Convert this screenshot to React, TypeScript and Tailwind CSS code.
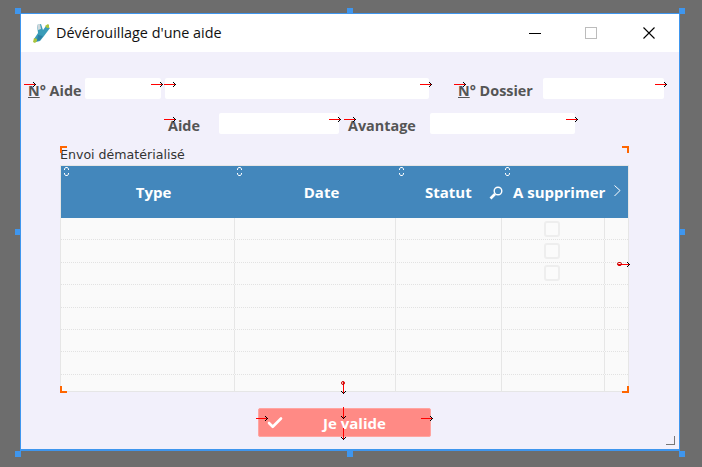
import { Check } from "lucide-react";

const labelCls = "font-['Open_Sans',sans-serif] font-bold text-[14.4px] leading-[20px] text-[#555555]";
const inputCls = "h-[21px] bg-white rounded-[2px] shrink-0";
const rows = [0, 1, 2, 3, 4, 5, 6, 7];

// editor overlay: arrows between focusable fields
const rightArrows = [
  [24, 84], [151, 84], [164, 84], [420, 84], [454, 84], [655, 84],
  [164, 119], [329, 119], [344, 119], [566, 119],
  [256, 418], [421, 418],
];
const downArrows = [
  [343, 407],
  [343, 428],
];
const handles = [
  [15, 8], [347, 8], [679, 8],
  [15, 229], [679, 229],
  [15, 451], [347, 451], [679, 451],
];
const resizers = [64, 237, 399, 505];

const RightArrow = ({ x, y }: { x: number; y: number }) => (
  <svg className="absolute" style={{ left: x, top: y - 4 }} width="13" height="9" viewBox="0 0 13 9" fill="none" shapeRendering="crispEdges">
    <path d="M0 4.5H12" stroke="#ff0000" />
    <path d="M9 1.5h1v1h1v1h1v1h-1v1h-1v1H9v-1h1v-1h1v-1h-1v-1H9z" fill="#000" />
  </svg>
);

const DownArrow = ({ x, y }: { x: number; y: number }) => (
  <svg className="absolute" style={{ left: x - 4, top: y }} width="9" height="13" viewBox="0 0 9 13" fill="none" shapeRendering="crispEdges">
    <path d="M4.5 0V12" stroke="#ff0000" />
    <path d="M1.5 9v1h1v1h1v1h1v-1h1v-1h1V9h-1v1h-1v1h-1v-1h-1V9z" fill="#000" />
  </svg>
);

const AppIcon = () => (
  <svg width="18" height="20" viewBox="0 0 18 20" className="shrink-0">
    <path d="M4 2l4-1 2 6 3-4 4 2-6 8-4 5-4 1-2-3 4-6z" fill="#3a9cb8" />
    <path d="M4 2l3-1 1 5-3 1z" fill="#cfd8dc" />
    <path d="M12 3l3-2 1 1 0 3-2 0z" fill="#a9c43c" />
    <path d="M1 15l3 1 0 2-2 2-2-1z" fill="#a9c43c" />
    <path d="M5 12l5 1-3 4-3 1z" fill="#2b7fa3" />
  </svg>
);

export default function App() {
  return (
    <div className="relative w-[702px] h-[467px] overflow-hidden bg-[#6d6d6d] pl-[20px] pt-[13px]">
      <div className="w-[660px] h-[438px] border-x border-t border-b-2 border-[#3f96ee] bg-[#f2f0fb] flex flex-col">
        {/* title bar */}
        <div className="h-[38px] bg-white flex items-center shrink-0 pl-[12px]">
          <AppIcon />
          <span className="ml-[5px] font-['Open_Sans',sans-serif] text-[14.4px] text-[#111111]">
            Dévérouillage d'une aide
          </span>
          <div className="ml-auto flex items-center mr-[24px]">
            <div className="w-[12px] h-px bg-black" />
            <div className="ml-[44px] w-[12px] h-[12px] border border-[#bcbcbc]" />
            <svg className="ml-[46px]" width="12" height="12" viewBox="0 0 12 12" fill="none">
              <path d="M0.5 0.5L11.5 11.5M11.5 0.5L0.5 11.5" stroke="#000" strokeWidth="1.1" />
            </svg>
          </div>
        </div>

        {/* form */}
        <div className="flex pt-[26px] pl-[7px] h-[47px] shrink-0">
          <div className={`${labelCls} w-[57px] pt-[3px]`}>
            <span className="underline">N</span>° Aide
          </div>
          <div className={`${inputCls} w-[76px]`} />
          <div className={`${inputCls} w-[264px] ml-[4px]`} />
          <div className={`${labelCls} w-[114px] pl-[29px] pt-[3px] whitespace-nowrap`}>
            <span className="underline">N</span>° Dossier
          </div>
          <div className={`${inputCls} w-[121px]`} />
        </div>
        <div className="flex mt-[14px] pl-[147px] h-[21px] shrink-0">
          <div className={`${labelCls} w-[51px] pt-[3px]`}>Aide</div>
          <div className={`${inputCls} w-[120px]`} />
          <div className={`${labelCls} w-[91px] pl-[9px] pt-[3px]`}>Avantage</div>
          <div className={`${inputCls} w-[145px]`} />
        </div>

        {/* table */}
        <div className="ml-[39px] mt-[12px] w-[569px] shrink-0">
          <div className="font-['DejaVu_Sans',sans-serif] text-[12.6px] leading-[16px] pt-px text-[#333333] h-[19px]">
            Envoi dématérialisé
          </div>
          <div className="h-[227px] bg-[#fafafa] border border-[#e6e6e6]">
            <div className="h-[52px] bg-[#4387bc] grid grid-cols-[174px_161px_106px_103px_23px] items-center font-['Open_Sans',sans-serif] font-bold text-[15px] text-white">
              <div className="text-center pl-[11px]">Type</div>
              <div className="text-center pl-[12px]">Date</div>
              <div className="pl-[29px]">Statut</div>
              <div className="pl-[11px] whitespace-nowrap">A supprimer</div>
              <div />
            </div>
            {rows.map((r) => (
              <div
                key={r}
                className={`grid grid-cols-[174px_161px_106px_103px_23px] ${r < 7 ? "h-[22.4px] border-b border-dotted border-[#e2e2e2]" : "h-[16.2px]"}`}
              >
                <div className="border-r border-[#e6e6e6]" />
                <div className="border-r border-[#e6e6e6]" />
                <div className="border-r border-[#e6e6e6]" />
                <div className="border-r border-[#e6e6e6] flex justify-center items-center pr-[3px]">
                  {r < 3 && (
                    <div className="w-[16px] h-[16px] bg-[#fbfbfb] border-2 border-[#eeeeee] rounded-[3px]" />
                  )}
                </div>
                <div />
              </div>
            ))}
          </div>
        </div>

        {/* submit */}
        <div className="ml-[237px] mt-[16px] w-[173px] h-[29px] bg-[#ff8a85] border border-[#ffa5a1] rounded-[2px] flex items-center shrink-0">
          <Check className="ml-[7px] text-white" size={18} strokeWidth={3.5} />
          <span className="ml-[39px] font-['Open_Sans',sans-serif] font-bold text-[15px] pt-px text-white">Je valide</span>
        </div>
      </div>

      {/* header icons */}
      <svg className="absolute left-[489px] top-[186px]" width="14" height="14" viewBox="0 0 14 14" fill="none">
        <circle cx="9" cy="5" r="3.8" stroke="#fff" strokeWidth="1.4" />
        <path d="M6 8L1.5 12.5" stroke="#fff" strokeWidth="2.6" />
      </svg>
      <svg className="absolute left-[614px] top-[185px]" width="7" height="12" viewBox="0 0 7 12" fill="none">
        <path d="M0.5 0.5L6 5.5L0.5 11" stroke="#fff" />
      </svg>
      {resizers.map((x) => (
        <svg key={x} className="absolute top-[167px]" style={{ left: x }} width="5" height="9" viewBox="0 0 5 9" fill="none">
          <path d="M0.5 3V2L1.5 0.5H3.5L4.5 2V3M0.5 6V7L1.5 8.5H3.5L4.5 7V6" stroke="#fff" />
        </svg>
      ))}

      {/* selection brackets */}
      <div className="absolute left-[60px] top-[146px] w-[7px] h-[7px] border-l-2 border-t-2 border-[#ff6600]" />
      <div className="absolute left-[622px] top-[146px] w-[7px] h-[7px] border-r-2 border-t-2 border-[#ff6600]" />
      <div className="absolute left-[60px] top-[386px] w-[7px] h-[7px] border-l-2 border-b-2 border-[#ff6600]" />
      <div className="absolute left-[622px] top-[386px] w-[7px] h-[7px] border-r-2 border-b-2 border-[#ff6600]" />

      {/* resize grip */}
      <div className="absolute left-[666px] top-[436px] w-[9px] h-[9px] border-r border-b border-[#777777]" />

      {rightArrows.map(([x, y]) => (
        <RightArrow key={`${x}-${y}`} x={x} y={y} />
      ))}
      {downArrows.map(([x, y]) => (
        <DownArrow key={`${x}-${y}`} x={x} y={y} />
      ))}
      <DownArrow x={343} y={382} />
      <div className="absolute left-[341px] top-[381px] w-[4px] h-[4px] border border-[#cc0000] rounded-full" />
      <RightArrow x={618} y={264} />
      <div className="absolute left-[617px] top-[262px] w-[5px] h-[4px] border border-[#cc0000] rounded-full" />

      {handles.map(([x, y]) => (
        <div key={`${x}-${y}`} className="absolute w-[6px] h-[6px] bg-[#3f96ee]" style={{ left: x, top: y }} />
      ))}
    </div>
  );
}
